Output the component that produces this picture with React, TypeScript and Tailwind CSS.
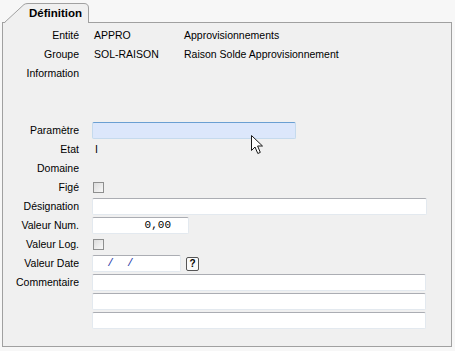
import React from 'react';

const font = { fontFamily: '"Liberation Sans", Arial, sans-serif' };

function Label({ children }: { children?: React.ReactNode }) {
  return <div className="w-[76px] shrink-0 text-right">{children}</div>;
}

function Row({ label, children }: { label?: string; children?: React.ReactNode }) {
  return (
    <div className="flex h-[19px] items-center">
      <Label>{label}</Label>
      <div className="ml-[13px] flex items-center">{children}</div>
    </div>
  );
}

function Field({ w, children, className = '' }: { w: string; children?: React.ReactNode; className?: string }) {
  return (
    <div
      className={`flex h-[17px] items-center rounded-[2px] border border-[#e3e9ef] border-t-[#abadb3] bg-white ${w} ${className}`}
    >
      {children}
    </div>
  );
}

function Check() {
  return (
    <div className="ml-[1px] h-[11px] w-[11px] border border-[#8e8f8f] bg-[linear-gradient(135deg,#dcdcdc,#f8f8f8)]" />
  );
}

function Cursor() {
  return (
    <svg className="absolute left-[250px] top-[134px]" width="14" height="22" viewBox="0 0 14 22">
      <path
        d="M1.5 1.5 L1.5 16.5 L5 13 L7.8 19.5 L10.3 18.4 L7.6 12 L12.5 12 Z"
        fill="#ffffff"
        stroke="#1a1a1a"
        strokeWidth="1"
        strokeLinejoin="miter"
      />
    </svg>
  );
}

export default function App() {
  return (
    <div className="relative h-[351px] w-[455px] overflow-hidden bg-[#f7f7f7] text-[10.5px] text-black" style={font}>
      <div className="h-[22px]" />
      <div className="ml-[2px] h-[325px] w-[450px] border border-[#a0a0a0] bg-[#f0f0f0] pt-[3px]">
        <Row label="Entité">
          <div className="w-[92px] pl-[2px]">APPRO</div>
          <div>Approvisionnements</div>
        </Row>
        <Row label="Groupe">
          <div className="w-[92px] pl-[2px]">SOL-RAISON</div>
          <div>Raison Solde Approvisionnement</div>
        </Row>
        <Row label="Information" />
        <div className="h-[38px]" />
        <Row label="Paramètre">
          <div className="h-[17px] w-[204px] rounded-[2px] border border-[#c5daed] border-t-[#6a9fd2] bg-[#dce7fb]" />
        </Row>
        <Row label="Etat">
          <div className="pl-[3px]">I</div>
        </Row>
        <Row label="Domaine" />
        <Row label="Figé">
          <Check />
        </Row>
        <Row label="Désignation">
          <Field w="w-[335px]" />
        </Row>
        <Row label="Valeur Num.">
          <Field w="w-[97px]" className="justify-end pr-[17px]">
            <span className="text-[11px]" style={{ fontFamily: '"Liberation Mono", "Courier New", monospace' }}>
              0,00
            </span>
          </Field>
        </Row>
        <Row label="Valeur Log.">
          <Check />
        </Row>
        <Row label="Valeur Date">
          <Field w="w-[89px]" className="pl-[1px]">
            <span
              className="whitespace-pre text-[11px] text-[#2a3aa8]"
              style={{ fontFamily: '"Liberation Mono", "Courier New", monospace' }}
            >
              {'  /  /'}
            </span>
          </Field>
          <div className="ml-[5px] flex h-[14px] w-[13px] items-center justify-center rounded-[2px] border border-[#555] bg-[#fafafa] text-[10px] font-bold leading-none">
            ?
          </div>
        </Row>
        <Row label="Commentaire">
          <Field w="w-[334px]" />
        </Row>
        <Row>
          <Field w="w-[334px]" />
        </Row>
        <Row>
          <Field w="w-[334px]" />
        </Row>
      </div>
      <div className="absolute left-[4px] top-[2px] h-[22px] w-[86px]">
        <svg className="absolute left-0 top-0" width="86" height="22" viewBox="0 0 86 22">
          <path d="M0.5 21 L20 2.5 Q21.5 1.5 24 1.5 L80 1.5 Q84.5 1.5 84.5 6 L84.5 21 Z" fill="#f0f0f0" />
          <path
            d="M0.5 20.5 L20 2.5 Q21.5 1.5 24 1.5 L80 1.5 Q84.5 1.5 84.5 6 L84.5 21"
            fill="none"
            stroke="#a0a0a0"
            strokeWidth="1"
          />
        </svg>
        <div className="absolute left-[25px] top-[4px] text-[11.5px] font-bold leading-[14px]">Définition</div>
      </div>
      <Cursor />
    </div>
  );
}
